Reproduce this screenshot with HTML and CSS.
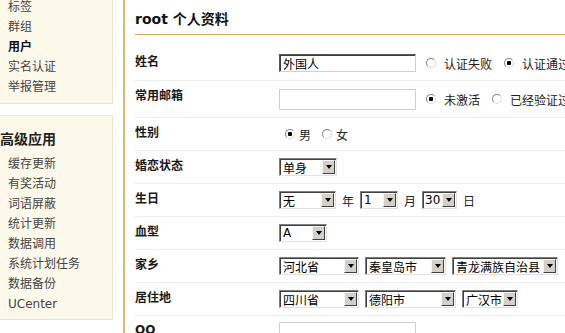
FILE: index.html
```html
<!DOCTYPE html>
<html>
<head>
    <meta charset="utf-8">
    <title>root 个人资料</title>
    <link rel="stylesheet" href="styles.css">
</head>
<body>
    <div class="page">
        <aside class="sidebar">
            <div class="menu-box first">
                <ul class="menu">
                    <li>标签</li>
                    <li>群组</li>
                    <li class="current">用户</li>
                    <li>实名认证</li>
                    <li>举报管理</li>
                </ul>
            </div>
            <div class="menu-box">
                <h3>高级应用</h3>
                <ul class="menu">
                    <li>缓存更新</li>
                    <li>有奖活动</li>
                    <li>词语屏蔽</li>
                    <li>统计更新</li>
                    <li>数据调用</li>
                    <li>系统计划任务</li>
                    <li>数据备份</li>
                    <li>UCenter</li>
                </ul>
            </div>
        </aside>

        <main class="profile">
            <h2>root 个人资料</h2>

            <div class="row first">
                <div class="label">姓名</div>
                <div class="field">
                    <input type="text" class="text inset" value="外国人">
                    <label class="option"><input type="radio" class="radio" name="realname"> 认证失败</label>
                    <label class="option"><input type="radio" class="radio" name="realname" checked> 认证通过</label>
                </div>
            </div>

            <div class="row email">
                <div class="label">常用邮箱</div>
                <div class="field">
                    <input type="text" class="text plain">
                    <label class="option"><input type="radio" class="radio" name="mailstate" checked> 未激活</label>
                    <label class="option"><input type="radio" class="radio" name="mailstate"> 已经验证过</label>
                </div>
            </div>

            <div class="row">
                <div class="label">性别</div>
                <div class="field gender">
                    <label class="option tight"><input type="radio" class="radio" name="gender" checked> 男</label>
                    <label class="option tight"><input type="radio" class="radio" name="gender"> 女</label>
                </div>
            </div>

            <div class="row">
                <div class="label">婚恋状态</div>
                <div class="field">
                    <span class="select marital"><span class="value">单身</span><span class="arrow"></span></span>
                </div>
            </div>

            <div class="row">
                <div class="label">生日</div>
                <div class="field dates">
                    <span class="select year"><span class="value">无</span><span class="arrow"></span></span>
                    <span>年</span>
                    <span class="select month"><span class="value">1</span><span class="arrow"></span></span>
                    <span>月</span>
                    <span class="select day"><span class="value">30</span><span class="arrow"></span></span>
                    <span>日</span>
                </div>
            </div>

            <div class="row">
                <div class="label">血型</div>
                <div class="field">
                    <span class="select blood"><span class="value">A</span><span class="arrow"></span></span>
                </div>
            </div>

            <div class="row">
                <div class="label">家乡</div>
                <div class="field dates">
                    <span class="select province"><span class="value">河北省</span><span class="arrow"></span></span>
                    <span class="select city"><span class="value">秦皇岛市</span><span class="arrow"></span></span>
                    <span class="select county"><span class="value">青龙满族自治县</span><span class="arrow"></span></span>
                </div>
            </div>

            <div class="row">
                <div class="label">居住地</div>
                <div class="field dates">
                    <span class="select province"><span class="value">四川省</span><span class="arrow"></span></span>
                    <span class="select city-wide"><span class="value">德阳市</span><span class="arrow"></span></span>
                    <span class="select district"><span class="value">广汉市</span><span class="arrow"></span></span>
                </div>
            </div>

            <div class="row">
                <div class="label">QQ</div>
                <div class="field">
                    <input type="text" class="text plain">
                </div>
            </div>
        </main>
    </div>
</body>
</html>
```

FILE: styles.css
```css
body {
    margin: 0;
    font-family: "DejaVu Sans", "Noto Sans CJK SC", sans-serif;
    font-size: 12px;
    color: #333;
    background-color: #fff;
    overflow: hidden;
}
.page {
    display: flex;
    width: 565px;
    height: 333px;
    overflow: hidden;
}

/* left menu */
.sidebar {
    flex: 0 0 138px;
    margin-left: -15px;
}
.menu-box {
    width: 128px;
    box-sizing: border-box;
    margin-top: 11px;
    padding: 11px 0 5px;
    background-color: #fcf9eb;
    border: 1px solid #ebe5cf;
}
.menu-box.first {
    margin-top: -4px;
    padding: 0 0 6px;
}
.menu-box h3 {
    margin: 0 0 3px;
    padding-left: 14px;
    font-size: 14px;
    line-height: 24px;
    color: #222;
}
.menu {
    list-style: none;
    margin: 0;
    padding: 0 0 0 22px;
}
.menu li {
    line-height: 20px;
    color: #444;
}
.menu li.current {
    font-weight: bold;
    color: #111;
}

/* profile form */
.profile {
    flex: 1;
    min-width: 0;
    border-left: 2px solid #e6b86c;
    padding-left: 10px;
    white-space: nowrap;
}
.profile h2 {
    margin: 0;
    padding: 6px 0 2px;
    font-size: 14px;
    line-height: 26px;
    color: #111;
    border-bottom: 1px solid #e0ab55;
}
.row {
    display: flex;
    align-items: center;
    height: 32px;
    border-bottom: 1px solid #eee;
}
.row.first {
    height: 34px;
    padding-top: 11px;
}
.row.email {
    height: 36px;
}
.label {
    flex: 0 0 144px;
    margin-top: -5px;
    font-weight: bold;
    color: #1a1a1a;
}
.row.first .label {
    margin-top: -6px;
}
.row.email .label {
    margin-top: -10px;
}
.field {
    display: flex;
    align-items: center;
    gap: 10px;
    color: #222;
}
.field.gender {
    margin-left: 6px;
    gap: 11px;
}
.field.dates {
    gap: 6px;
}

.text {
    width: 137px;
    height: 18px;
    box-sizing: border-box;
    margin: 0;
    padding: 0 3px;
    font: inherit;
    color: #000;
    background-color: #fff;
    outline: none;
}
.text.inset {
    border: 1px solid;
    border-color: #555 #d4d0c8 #d4d0c8 #555;
    box-shadow: inset 1px 1px 0 #404040;
}
.text.plain {
    height: 21px;
    border: 1px solid #cfcfcf;
}

.option {
    display: inline-flex;
    align-items: center;
    gap: 8px;
    margin-right: 2px;
}
.option.tight {
    gap: 4px;
    margin-right: 0;
}
.radio {
    appearance: none;
    width: 10px;
    height: 10px;
    margin: 0;
    border: 1px solid;
    border-color: #808080 #dcdcdc #dcdcdc #808080;
    border-radius: 50%;
    background-color: #fff;
}
.radio:checked {
    background: radial-gradient(circle, #000 0 2px, #fff 2.5px);
}

/* classic drop-down */
.select {
    display: inline-flex;
    align-items: center;
    justify-content: space-between;
    height: 18px;
    box-sizing: border-box;
    padding: 1px 1px 1px 3px;
    border: 1px solid;
    border-color: #7f7f7f #e2e2e2 #e2e2e2 #7f7f7f;
    box-shadow: inset 1px 1px 0 #404040;
    background-color: #fff;
    color: #000;
}
.select .value {
    overflow: hidden;
}
.arrow {
    display: flex;
    align-items: center;
    justify-content: center;
    flex: 0 0 13px;
    height: 14px;
    box-sizing: border-box;
    background-color: #d4d0c8;
    border: 1px solid;
    border-color: #f4f4f4 #404040 #404040 #f4f4f4;
}
.arrow::after {
    content: "";
    border-left: 3.5px solid transparent;
    border-right: 3.5px solid transparent;
    border-top: 4px solid #000;
}
.select.marital { width: 58px; }
.select.year { width: 57px; }
.select.month { width: 38px; }
.select.day { width: 35px; padding-left: 2px; }
.select.blood { width: 48px; }
.select.province { width: 80px; }
.select.city { width: 81px; }
.select.county { width: 106px; }
.select.city-wide { width: 91px; }
.select.district { width: 56px; }
```
